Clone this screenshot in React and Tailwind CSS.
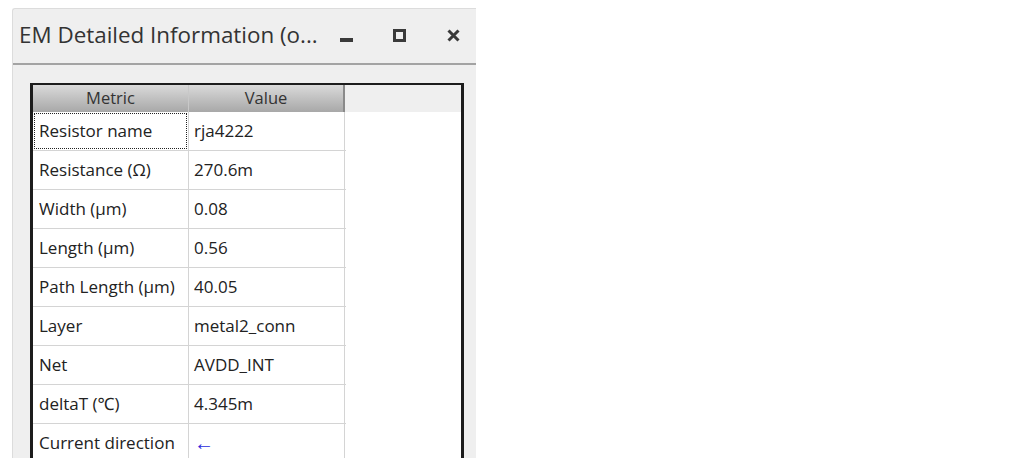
import React from "react";

const rows = [
  ["Resistor name", "rja4222"],
  ["Resistance (Ω)", "270.6m"],
  ["Width (µm)", "0.08"],
  ["Length (µm)", "0.56"],
  ["Path Length (µm)", "40.05"],
  ["Layer", "metal2_conn"],
  ["Net", "AVDD_INT"],
  ["deltaT (℃)", "4.345m"],
  ["Current direction", "←"],
];

export default function App() {
  return (
    <div
      className="w-[1013px] h-[458px] bg-white overflow-hidden"
      style={{ fontFamily: '"Open Sans", "Noto Sans", sans-serif' }}
    >
      <div className="ml-[12px] pt-[8px] w-[464px] h-full">
        <div className="h-full bg-[#efefef] flex flex-col rounded-tl-[3px] border-t border-l border-[#dcdcdc]">
          {/* title bar */}
          <div className="h-[54px] flex items-center pl-[6px] pr-[16px] shrink-0">
            <div className="text-[22.4px] text-[#333] leading-none flex-1 -mt-[2px]">
              EM Detailed Information (o...
            </div>
            <div className="flex items-center -mt-[1px]">
              <div className="w-[13px] h-[4px] bg-[#3a3a3a] mt-[9px] mr-[40px]" />
              <div className="w-[13px] h-[13px] border-[3px] border-[#3a3a3a] mr-[41px]" />
              <svg width="13" height="13" viewBox="0 0 13 13">
                <path d="M1.5 1.5 L11.5 11.5 M11.5 1.5 L1.5 11.5" stroke="#3a3a3a" strokeWidth="3" />
              </svg>
            </div>
          </div>
          <div className="h-[2px] bg-[#a3a3a3] shrink-0" />
          {/* content */}
          <div className="flex-1 pl-[17px] pr-[12px] pt-[18px] min-h-0">
            <div className="h-full border-t-2 border-x-[3px] border-[#1c1c1c] bg-white overflow-hidden">
              <div className="flex h-[27px] bg-[#efefef]">
                <div className="w-[156px] flex items-center justify-center text-[16.5px] text-[#333] bg-gradient-to-b from-[#dadada] to-[#a8a8a8] border-r border-[#c8c8c8]">
                  Metric
                </div>
                <div className="w-[156px] flex items-center justify-center text-[16.5px] text-[#333] bg-gradient-to-b from-[#dadada] to-[#a8a8a8] border-r-2 border-[#8a8a8a]">
                  Value
                </div>
              </div>
              {rows.map(([k, v], i) => (
                <div key={k} className="flex h-[39px] w-[313px] border-b border-[#d4d4d4]">
                  <div className="w-[156px] border-r border-[#d4d4d4] p-[1px] shrink-0">
                    <div
                      className={
                        "h-full flex items-center pl-[4px] text-[17px] text-[#222] " +
                        (i === 0 ? "border border-dotted border-[#222]" : "border border-transparent")
                      }
                    >
                      {k}
                    </div>
                  </div>
                  <div className="w-[156px] border-r border-[#d4d4d4] flex items-center pl-[5px] text-[17px] text-[#222] shrink-0">
                    {v === "←" ? <span className="text-[#2b2bdc] text-[20px] leading-none">←</span> : v}
                  </div>
                </div>
              ))}
            </div>
          </div>
        </div>
      </div>
    </div>
  );
}
